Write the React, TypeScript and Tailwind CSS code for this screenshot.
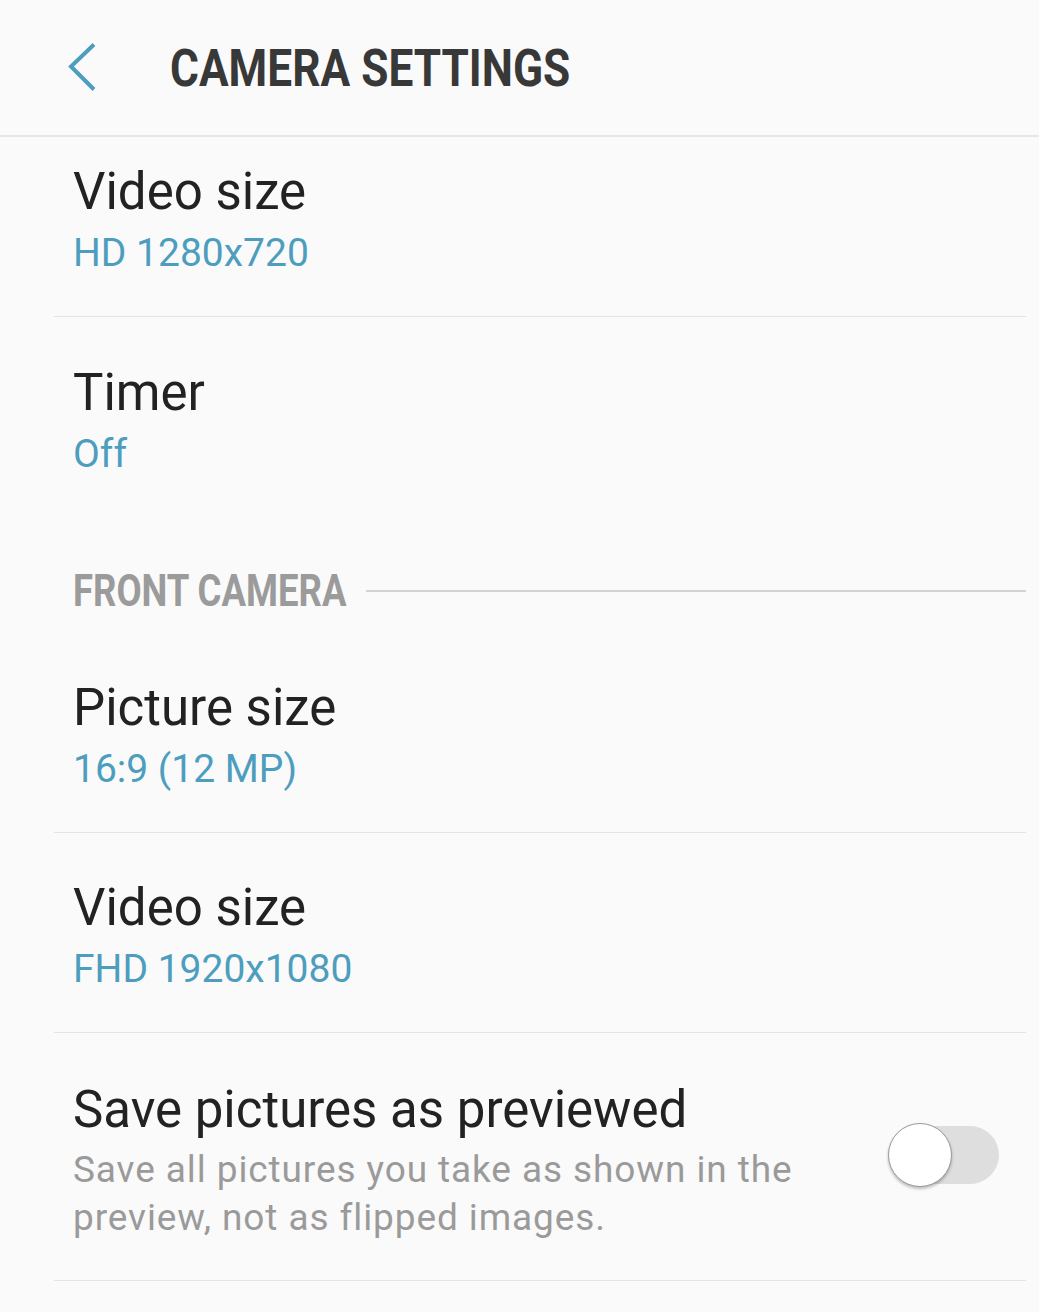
import React from 'react';

const font = { fontFamily: 'Roboto, "Noto Sans", sans-serif' };

// simple two-line setting row
function SettingRow({
  title,
  value,
  top = 'pt-[46px]',
  bottom = 'pb-[39px]',
  divider = true,
}: {
  title: string;
  value: string;
  top?: string;
  bottom?: string;
  divider?: boolean;
}) {
  return (
    <div className={`ml-[54px] mr-[13px] pl-[19px] ${top} ${bottom} ${divider ? 'border-b border-[#e4e4e4]' : ''}`}>
      <div className="text-[51px] leading-[58px] text-[#222222]">{title}</div>
      <div className="mt-[8px] text-[39px] leading-[48px] text-[#4d9ebe]">{value}</div>
    </div>
  );
}

function Toggle() {
  return (
    <div className="relative h-[64px] w-[111px] shrink-0">
      <div className="absolute left-[2px] top-[3px] h-[58px] w-[109px] rounded-full bg-[#dedede]" />
      <div className="absolute left-0 top-0 h-[64px] w-[64px] rounded-full border border-[#9a9a9a] bg-white shadow-[0_2px_3px_rgba(0,0,0,0.25)]" />
    </div>
  );
}

export default function App() {
  return (
    <div className="min-h-[1312px] w-[1039px] bg-[#fafafa]" style={font}>
      {/* Header */}
      <div className="flex h-[137px] items-start border-b-2 border-[#e6e6e6] pl-[68px] pt-[38px]">
        <svg className="mt-[5px] shrink-0" width="28" height="48" viewBox="0 0 28 48" fill="none">
          <polyline points="26,1.5 3,23.5 26,46.5" stroke="#4d9ebe" strokeWidth="4" />
        </svg>
        <div className="ml-[74px] mt-[5px] origin-left scale-x-[0.85] whitespace-nowrap text-[52px] font-bold leading-[52px] text-[#383838]">
          CAMERA SETTINGS
        </div>
      </div>

      <SettingRow title="Video size" value="HD 1280x720" top="pt-[26px]" bottom="pb-[39px]" />
      <SettingRow title="Timer" value="Off" top="pt-[47px]" bottom="pb-0" divider={false} />

      {/* Section header */}
      <div className="ml-[73px] mr-[13px] flex items-center pb-[16px] pt-[87px]">
        <div className="w-[273px] shrink-0">
          <span className="block origin-left scale-x-[0.83] whitespace-nowrap text-[44px] font-bold leading-[52px] text-[#9b9b9b]">
            FRONT CAMERA
          </span>
        </div>
        <div className="ml-[20px] h-[2px] flex-1 bg-[#d2d2d2]" />
      </div>

      <SettingRow title="Picture size" value="16:9 (12 MP)" />
      <SettingRow title="Video size" value="FHD 1920x1080" />

      {/* Save pictures as previewed */}
      <div className="ml-[54px] mr-[13px] flex items-start border-b border-[#e4e4e4] pb-[38px] pl-[19px] pr-[27px] pt-[48px]">
        <div className="flex-1 pr-[40px]">
          <div className="whitespace-nowrap text-[51px] leading-[58px] text-[#222222]">Save pictures as previewed</div>
          <div className="mt-[7px] text-[37px] leading-[48px] tracking-[0.9px] text-[#9a9a9a]">
            Save all pictures you take as shown in the preview, not as flipped images.
          </div>
        </div>
        <div className="mt-[42px]">
          <Toggle />
        </div>
      </div>
    </div>
  );
}
